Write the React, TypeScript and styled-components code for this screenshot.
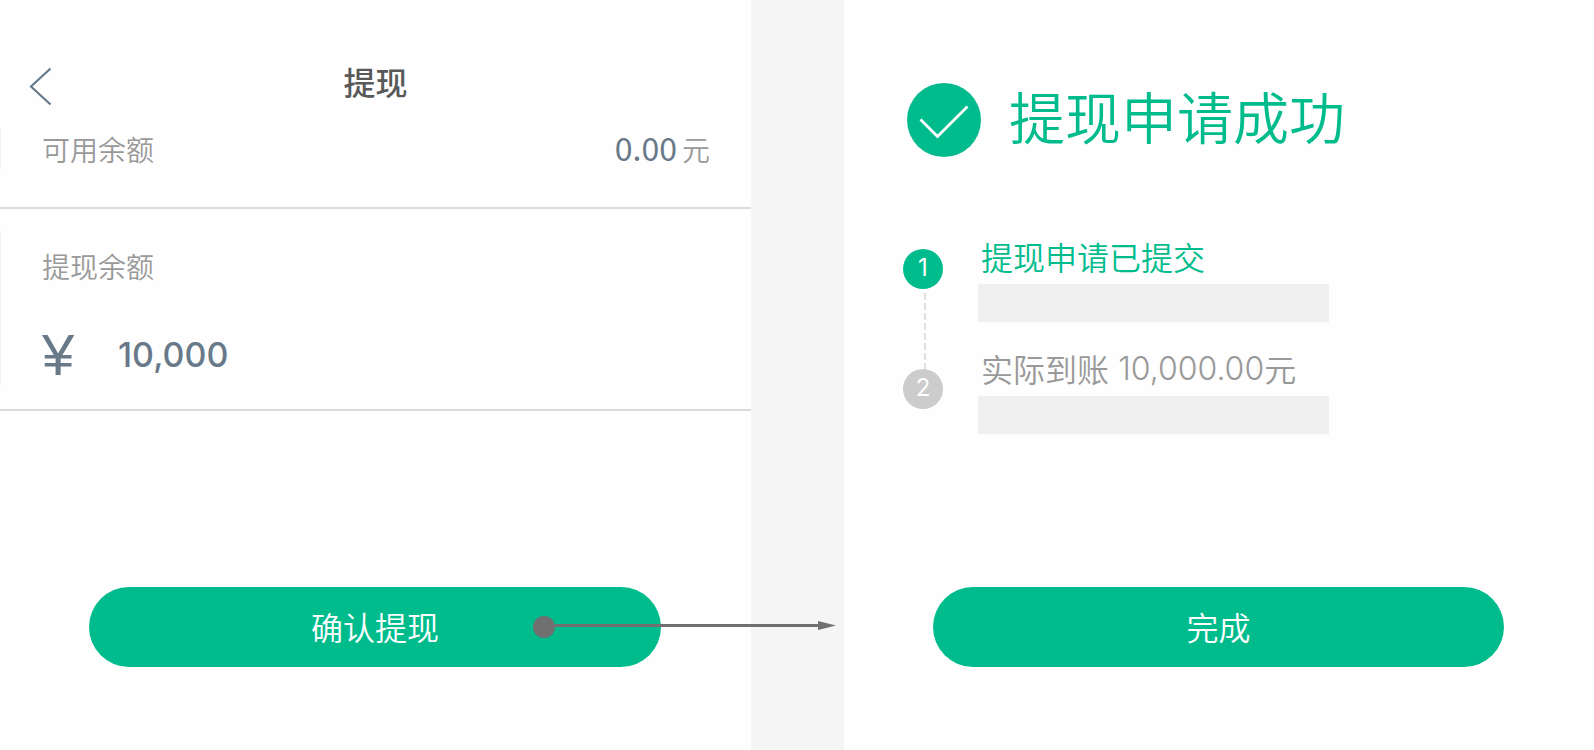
import React from 'react';
import styled, { createGlobalStyle } from 'styled-components';

const green = '#00bc8d';
const slate = '#687989';
const grey = '#999999';

const GlobalStyle = createGlobalStyle`
  *, *::before, *::after { box-sizing: border-box; }
  body {
    margin: 0;
    background: #f5f5f5;
    font-family: "Noto Sans CJK SC", sans-serif;
    font-weight: 350;
  }
  h1, h2, p, ol { margin: 0; padding: 0; font-weight: inherit; }
  button, input { font: inherit; border: 0; padding: 0; background: none; }
`;

const Board = styled.div`
  display: grid;
  grid-template-columns: 751fr 93px 750fr;
  min-height: 100vh;
`;

const Screen = styled.main`
  grid-column: ${(p: { $column: number }) => p.$column};
  background: #fefefe;
`;

const Header = styled.header`
  display: grid;
  grid-template-columns: 60px 1fr 60px;
  align-items: start;
  height: 128px;
  padding-top: 61px;
`;

const BackButton = styled.button`
  display: flex;
  padding: 6px 0 0 29px;
  color: ${slate};
`;

const Title = styled.h1`
  font-size: 32px;
  line-height: 40px;
  font-weight: 500;
  text-align: center;
  color: #595959;
`;

const Section = styled.section`
  padding: ${(p: { $top: number; $bottom: number }) => `${p.$top}px 0 ${p.$bottom}px`};
  border-bottom: 2px solid #dcdcdc;
`;

const BalanceRow = styled.div`
  display: flex;
  justify-content: space-between;
  align-items: center;
  height: 42px;
  padding: 0 41px;
  border-left: 1px solid #f4f4f4;
  font-size: 28px;
  line-height: 40px;
  color: ${grey};
`;

const Balance = styled.span`
  display: flex;
  align-items: center;
  gap: 5px;
`;

const BalanceValue = styled.span`
  padding-bottom: 4px;
  font-size: 32px;
  font-weight: 400;
  color: ${slate};
`;

const AmountBlock = styled.div`
  height: 156px;
  padding: 16px 40px 0 41px;
  border-left: 1px solid #f4f4f4;
`;

const AmountLabel = styled.label`
  display: block;
  font-size: 28px;
  line-height: 40px;
  color: ${grey};
`;

const AmountRow = styled.div`
  display: flex;
  align-items: center;
  height: 60px;
  margin-top: 39px;
  color: ${slate};
`;

const Currency = styled.span`
  width: 76px;
  font-family: "Liberation Sans", sans-serif;
  font-size: 58px;
  font-weight: 400;
  line-height: 60px;
`;

const AmountInput = styled.input`
  flex: 1;
  min-width: 0;
  font-family: Inter, sans-serif;
  font-size: 34px;
  font-weight: 500;
  line-height: 60px;
  color: inherit;
  outline: none;
`;

const Action = styled.div`
  position: relative;
  margin: ${(p: { $top: number }) => p.$top}px 90px 0 89px;
`;

const PillButton = styled.button`
  display: block;
  width: 100%;
  height: 80px;
  padding-bottom: 2px;
  border-radius: 40px;
  background: ${green};
  color: #fff;
  font-size: 32px;
  line-height: 40px;
`;

const FlowArrow = styled.svg`
  position: absolute;
  top: 29px;
  right: -175px;
  pointer-events: none;
`;

const Success = styled.header`
  display: flex;
  align-items: center;
  gap: 28px;
  height: 74px;
  margin: 83px 0 0 63px;
  color: ${green};
`;

const SuccessTitle = styled.h2`
  padding-bottom: 10px;
  font-size: 56px;
  line-height: 72px;
`;

const Steps = styled.ol`
  display: grid;
  gap: 29px;
  margin: 82px 0 0 59px;
  list-style: none;
`;

const Step = styled.li`
  display: grid;
  grid-template-columns: 40px 351px;
  column-gap: 35px;
  height: 83px;
`;

const Rail = styled.div`
  display: flex;
  flex-direction: column;
  align-items: center;
  padding-top: ${(p: { $top: number }) => p.$top}px;
`;

const Marker = styled.span`
  flex: none;
  width: 40px;
  height: 40px;
  border-radius: 50%;
  background: ${(p: { $active?: boolean }) => (p.$active ? green : '#cccccc')};
  color: #fff;
  font-family: Inter, sans-serif;
  font-size: 24px;
  font-weight: 400;
  line-height: 38px;
  text-align: center;
`;

const Connector = styled.svg`
  flex: none;
  margin: 4px 0 0 3px;
`;

const StepTitle = styled.p`
  display: flex;
  height: 45px;
  padding-left: 3px;
  font-size: 32px;
  line-height: 34px;
  white-space: pre;
  color: ${(p: { $active?: boolean }) => (p.$active ? green : grey)};
`;

const Figure = styled.span`
  padding-left: 2px;
  font-family: Inter, sans-serif;
  line-height: 36px;
`;

const Placeholder = styled.div`
  height: 38px;
  background: #f0f0f0;
`;

export default function App() {
  return (
    <>
      <GlobalStyle />
      <Board>
        <Screen $column={1}>
          <Header>
            <BackButton type="button" aria-label="返回">
              <svg width="24" height="39" viewBox="0 0 24 39" fill="none" stroke="currentColor" strokeWidth="2.2">
                <path d="M21.5 1.5 2 19.5 21.5 37.5" />
              </svg>
            </BackButton>
            <Title>提现</Title>
          </Header>
          <Section $top={0} $bottom={37}>
            <BalanceRow>
              <span>可用余额</span>
              <Balance>
                <BalanceValue>0.00</BalanceValue>
                <span>元</span>
              </Balance>
            </BalanceRow>
          </Section>
          <Section $top={21} $bottom={23}>
            <AmountBlock>
              <AmountLabel htmlFor="amount">提现余额</AmountLabel>
              <AmountRow>
                <Currency>¥</Currency>
                <AmountInput id="amount" inputMode="decimal" defaultValue="10,000" />
              </AmountRow>
            </AmountBlock>
          </Section>
          <Action $top={176}>
            <PillButton type="button">确认提现</PillButton>
            <FlowArrow width="303" height="22" viewBox="0 0 303 22" fill="#707070" aria-hidden="true">
              <circle cx="11" cy="11" r="11" />
              <path d="M11 8H285V5L303 9.500 285 14V11H11Z" />
            </FlowArrow>
          </Action>
        </Screen>
        <Screen $column={3}>
          <Success>
            <svg width="74" height="74" viewBox="0 0 74 74" fill="none" aria-hidden="true">
              <circle cx="37" cy="37" r="37" fill={green} />
              <path d="M13.500 36.500 30.500 53.500 60.500 23.500" stroke="#fff" strokeWidth="2.800" />
            </svg>
            <SuccessTitle>提现申请成功</SuccessTitle>
          </Success>
          <Steps>
            <Step>
              <Rail $top={10}>
                <Marker $active>1</Marker>
                <Connector width="2" height="76" viewBox="0 0 2 76" aria-hidden="true">
                  <path d="M1 0V76" stroke="#e0e0e0" strokeWidth="2" strokeDasharray="7 3" />
                </Connector>
              </Rail>
              <div>
                <StepTitle $active>提现申请已提交</StepTitle>
                <Placeholder />
              </div>
            </Step>
            <Step>
              <Rail $top={18}>
                <Marker>2</Marker>
              </Rail>
              <div>
                <StepTitle>
                  <span>实际到账 </span>
                  <Figure>10,000.00</Figure>
                  <span>元</span>
                </StepTitle>
                <Placeholder />
              </div>
            </Step>
          </Steps>
          <Action $top={153}>
            <PillButton type="button">完成</PillButton>
          </Action>
        </Screen>
      </Board>
    </>
  );
}
